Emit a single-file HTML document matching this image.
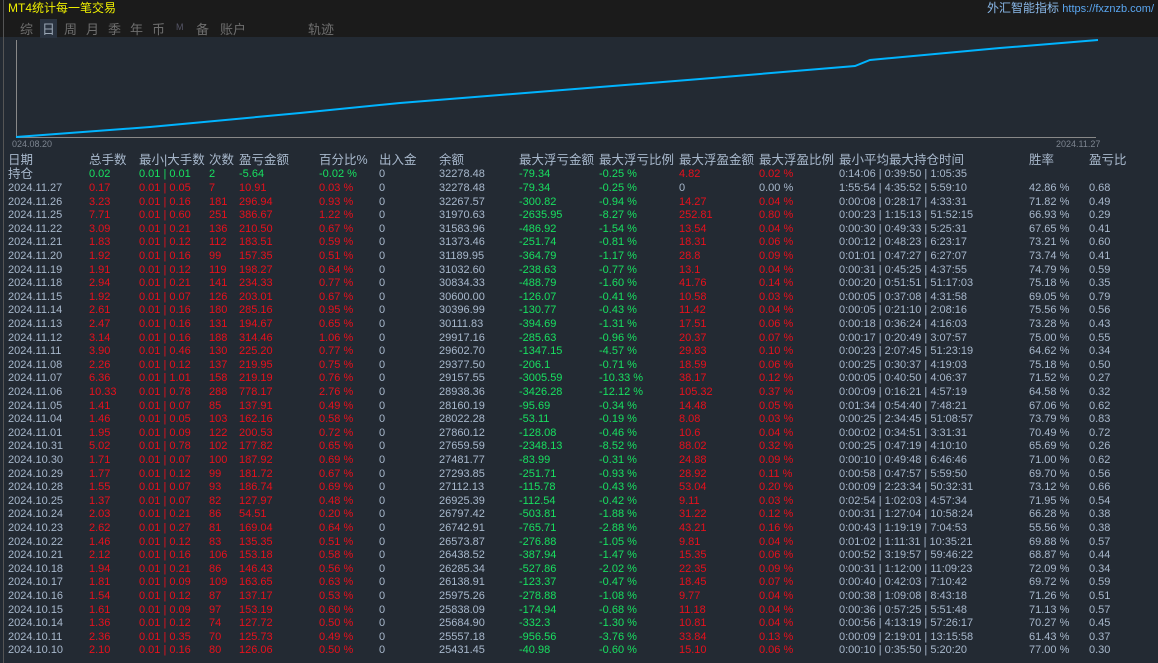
<!DOCTYPE html>
<html><head><meta charset="utf-8"><style>
body{margin:0;width:1158px;height:663px;overflow:hidden;background:#232a33;font-family:"Liberation Sans","Noto Sans CJK SC",sans-serif;position:relative}
.top{position:absolute;left:0;top:0;width:1158px;height:37px;background:#1b1b1b}
.title{position:absolute;left:8px;top:-1px;color:#f0f000;font-size:12px}
.tabs span{position:absolute;top:19px;color:#6e6e6e;font-size:13px;white-space:nowrap}
.sel{background:#2a3340;color:#9aa6b4 !important;padding:0 2px}
.rt{position:absolute;right:4px;top:-1px;font-size:12px;color:#8ab8e8}
.rt b{font-weight:normal;color:#5aa6f0;font-size:11px}
.lb{position:absolute;font-size:9px;color:#7d8590}
.r{position:absolute;left:0;height:13.6px;line-height:13.6px;font-size:11px;color:#a8b8cc;white-space:nowrap;width:1158px}
.r span{position:absolute;top:0}
.h{font-size:12.5px;color:#a8b8cc}
.g{color:#18e060}.d{color:#e8101c}
.a{left:8px}.b{left:89px}.c{left:139px}.e{left:209px}.f{left:239px}.p{left:319px}.i{left:379px}.j{left:439px}.k{left:519px}.l{left:599px}.m{left:679px}.n{left:759px}.o{left:839px}.q{left:1029px}.s{left:1089px}
</style></head><body>
<div class="top">
<div class="title">MT4统计每一笔交易</div>
<div class="tabs"><span style="left:20px">综</span><span class="sel" style="left:40px">日</span><span style="left:64px">周</span><span style="left:86px">月</span><span style="left:108px">季</span><span style="left:130px">年</span><span style="left:152px">币</span><span style="left:176px;font-size:9px;color:#556;top:22px">M</span><span style="left:196px">备</span><span style="left:220px">账户</span><span style="left:308px">轨迹</span></div>
<div class="rt">外汇智能指标 <b>https://fxznzb.com/</b></div>
</div>
<div style="position:absolute;left:3px;top:0;width:1px;height:663px;background:#555"></div>
<svg style="position:absolute;left:0;top:37px" width="1158" height="110">
<line x1="16.5" y1="3" x2="16.5" y2="100" stroke="#888" stroke-width="1"/>
<line x1="16" y1="100.5" x2="1096" y2="100.5" stroke="#888" stroke-width="1"/>
<polyline fill="none" stroke="#00b4ff" stroke-width="2" points="16,100 150,90 300,76 400,66 550,54 700,42 855,29 870,23 1000,11 1098,3"/>
</svg>
<div class="lb" style="left:12px;top:139px">024.08.20</div>
<div class="lb" style="left:1056px;top:139px">2024.11.27</div>
<div class="r h" style="top:154px"><span class="a">日期</span><span class="b">总手数</span><span class="c">最小|大手数</span><span class="e">次数</span><span class="f">盈亏金额</span><span class="p">百分比%</span><span class="i">出入金</span><span class="j">余额</span><span class="k">最大浮亏金额</span><span class="l">最大浮亏比例</span><span class="m">最大浮盈金额</span><span class="n">最大浮盈比例</span><span class="o">最小平均最大持仓时间</span><span class="q">胜率</span><span class="s">盈亏比</span></div>
<div class="r" style="top:168px"><span class="a h">持仓</span><span class="b g">0.02</span><span class="c g">0.01 | 0.01</span><span class="e g">2</span><span class="f g">-5.64</span><span class="p g">-0.02 %</span><span class="i">0</span><span class="j">32278.48</span><span class="k g">-79.34</span><span class="l g">-0.25 %</span><span class="m d">4.82</span><span class="n d">0.02 %</span><span class="o">0:14:06 | 0:39:50 | 1:05:35</span></div>
<div class="r" style="top:182px"><span class="a">2024.11.27</span><span class="b d">0.17</span><span class="c d">0.01 | 0.05</span><span class="e d">7</span><span class="f d">10.91</span><span class="p d">0.03 %</span><span class="i">0</span><span class="j">32278.48</span><span class="k g">-79.34</span><span class="l g">-0.25 %</span><span class="m">0</span><span class="n">0.00 %</span><span class="o">1:55:54 | 4:35:52 | 5:59:10</span><span class="q">42.86 %</span><span class="s">0.68</span></div>
<div class="r" style="top:195.6px"><span class="a">2024.11.26</span><span class="b d">3.23</span><span class="c d">0.01 | 0.16</span><span class="e d">181</span><span class="f d">296.94</span><span class="p d">0.93 %</span><span class="i">0</span><span class="j">32267.57</span><span class="k g">-300.82</span><span class="l g">-0.94 %</span><span class="m d">14.27</span><span class="n d">0.04 %</span><span class="o">0:00:08 | 0:28:17 | 4:33:31</span><span class="q">71.82 %</span><span class="s">0.49</span></div>
<div class="r" style="top:209.2px"><span class="a">2024.11.25</span><span class="b d">7.71</span><span class="c d">0.01 | 0.60</span><span class="e d">251</span><span class="f d">386.67</span><span class="p d">1.22 %</span><span class="i">0</span><span class="j">31970.63</span><span class="k g">-2635.95</span><span class="l g">-8.27 %</span><span class="m d">252.81</span><span class="n d">0.80 %</span><span class="o">0:00:23 | 1:15:13 | 51:52:15</span><span class="q">66.93 %</span><span class="s">0.29</span></div>
<div class="r" style="top:222.8px"><span class="a">2024.11.22</span><span class="b d">3.09</span><span class="c d">0.01 | 0.21</span><span class="e d">136</span><span class="f d">210.50</span><span class="p d">0.67 %</span><span class="i">0</span><span class="j">31583.96</span><span class="k g">-486.92</span><span class="l g">-1.54 %</span><span class="m d">13.54</span><span class="n d">0.04 %</span><span class="o">0:00:30 | 0:49:33 | 5:25:31</span><span class="q">67.65 %</span><span class="s">0.41</span></div>
<div class="r" style="top:236.4px"><span class="a">2024.11.21</span><span class="b d">1.83</span><span class="c d">0.01 | 0.12</span><span class="e d">112</span><span class="f d">183.51</span><span class="p d">0.59 %</span><span class="i">0</span><span class="j">31373.46</span><span class="k g">-251.74</span><span class="l g">-0.81 %</span><span class="m d">18.31</span><span class="n d">0.06 %</span><span class="o">0:00:12 | 0:48:23 | 6:23:17</span><span class="q">73.21 %</span><span class="s">0.60</span></div>
<div class="r" style="top:250px"><span class="a">2024.11.20</span><span class="b d">1.92</span><span class="c d">0.01 | 0.16</span><span class="e d">99</span><span class="f d">157.35</span><span class="p d">0.51 %</span><span class="i">0</span><span class="j">31189.95</span><span class="k g">-364.79</span><span class="l g">-1.17 %</span><span class="m d">28.8</span><span class="n d">0.09 %</span><span class="o">0:01:01 | 0:47:27 | 6:27:07</span><span class="q">73.74 %</span><span class="s">0.41</span></div>
<div class="r" style="top:263.6px"><span class="a">2024.11.19</span><span class="b d">1.91</span><span class="c d">0.01 | 0.12</span><span class="e d">119</span><span class="f d">198.27</span><span class="p d">0.64 %</span><span class="i">0</span><span class="j">31032.60</span><span class="k g">-238.63</span><span class="l g">-0.77 %</span><span class="m d">13.1</span><span class="n d">0.04 %</span><span class="o">0:00:31 | 0:45:25 | 4:37:55</span><span class="q">74.79 %</span><span class="s">0.59</span></div>
<div class="r" style="top:277.2px"><span class="a">2024.11.18</span><span class="b d">2.94</span><span class="c d">0.01 | 0.21</span><span class="e d">141</span><span class="f d">234.33</span><span class="p d">0.77 %</span><span class="i">0</span><span class="j">30834.33</span><span class="k g">-488.79</span><span class="l g">-1.60 %</span><span class="m d">41.76</span><span class="n d">0.14 %</span><span class="o">0:00:20 | 0:51:51 | 51:17:03</span><span class="q">75.18 %</span><span class="s">0.35</span></div>
<div class="r" style="top:290.8px"><span class="a">2024.11.15</span><span class="b d">1.92</span><span class="c d">0.01 | 0.07</span><span class="e d">126</span><span class="f d">203.01</span><span class="p d">0.67 %</span><span class="i">0</span><span class="j">30600.00</span><span class="k g">-126.07</span><span class="l g">-0.41 %</span><span class="m d">10.58</span><span class="n d">0.03 %</span><span class="o">0:00:05 | 0:37:08 | 4:31:58</span><span class="q">69.05 %</span><span class="s">0.79</span></div>
<div class="r" style="top:304.4px"><span class="a">2024.11.14</span><span class="b d">2.61</span><span class="c d">0.01 | 0.16</span><span class="e d">180</span><span class="f d">285.16</span><span class="p d">0.95 %</span><span class="i">0</span><span class="j">30396.99</span><span class="k g">-130.77</span><span class="l g">-0.43 %</span><span class="m d">11.42</span><span class="n d">0.04 %</span><span class="o">0:00:05 | 0:21:10 | 2:08:16</span><span class="q">75.56 %</span><span class="s">0.56</span></div>
<div class="r" style="top:318px"><span class="a">2024.11.13</span><span class="b d">2.47</span><span class="c d">0.01 | 0.16</span><span class="e d">131</span><span class="f d">194.67</span><span class="p d">0.65 %</span><span class="i">0</span><span class="j">30111.83</span><span class="k g">-394.69</span><span class="l g">-1.31 %</span><span class="m d">17.51</span><span class="n d">0.06 %</span><span class="o">0:00:18 | 0:36:24 | 4:16:03</span><span class="q">73.28 %</span><span class="s">0.43</span></div>
<div class="r" style="top:331.6px"><span class="a">2024.11.12</span><span class="b d">3.14</span><span class="c d">0.01 | 0.16</span><span class="e d">188</span><span class="f d">314.46</span><span class="p d">1.06 %</span><span class="i">0</span><span class="j">29917.16</span><span class="k g">-285.63</span><span class="l g">-0.96 %</span><span class="m d">20.37</span><span class="n d">0.07 %</span><span class="o">0:00:17 | 0:20:49 | 3:07:57</span><span class="q">75.00 %</span><span class="s">0.55</span></div>
<div class="r" style="top:345.2px"><span class="a">2024.11.11</span><span class="b d">3.90</span><span class="c d">0.01 | 0.46</span><span class="e d">130</span><span class="f d">225.20</span><span class="p d">0.77 %</span><span class="i">0</span><span class="j">29602.70</span><span class="k g">-1347.15</span><span class="l g">-4.57 %</span><span class="m d">29.83</span><span class="n d">0.10 %</span><span class="o">0:00:23 | 2:07:45 | 51:23:19</span><span class="q">64.62 %</span><span class="s">0.34</span></div>
<div class="r" style="top:358.8px"><span class="a">2024.11.08</span><span class="b d">2.26</span><span class="c d">0.01 | 0.12</span><span class="e d">137</span><span class="f d">219.95</span><span class="p d">0.75 %</span><span class="i">0</span><span class="j">29377.50</span><span class="k g">-206.1</span><span class="l g">-0.71 %</span><span class="m d">18.59</span><span class="n d">0.06 %</span><span class="o">0:00:25 | 0:30:37 | 4:19:03</span><span class="q">75.18 %</span><span class="s">0.50</span></div>
<div class="r" style="top:372.4px"><span class="a">2024.11.07</span><span class="b d">6.36</span><span class="c d">0.01 | 1.01</span><span class="e d">158</span><span class="f d">219.19</span><span class="p d">0.76 %</span><span class="i">0</span><span class="j">29157.55</span><span class="k g">-3005.59</span><span class="l g">-10.33 %</span><span class="m d">38.17</span><span class="n d">0.12 %</span><span class="o">0:00:05 | 0:40:50 | 4:06:37</span><span class="q">71.52 %</span><span class="s">0.27</span></div>
<div class="r" style="top:386px"><span class="a">2024.11.06</span><span class="b d">10.33</span><span class="c d">0.01 | 0.78</span><span class="e d">288</span><span class="f d">778.17</span><span class="p d">2.76 %</span><span class="i">0</span><span class="j">28938.36</span><span class="k g">-3426.28</span><span class="l g">-12.12 %</span><span class="m d">105.32</span><span class="n d">0.37 %</span><span class="o">0:00:09 | 0:16:21 | 4:57:19</span><span class="q">64.58 %</span><span class="s">0.32</span></div>
<div class="r" style="top:399.6px"><span class="a">2024.11.05</span><span class="b d">1.41</span><span class="c d">0.01 | 0.07</span><span class="e d">85</span><span class="f d">137.91</span><span class="p d">0.49 %</span><span class="i">0</span><span class="j">28160.19</span><span class="k g">-95.69</span><span class="l g">-0.34 %</span><span class="m d">14.48</span><span class="n d">0.05 %</span><span class="o">0:01:34 | 0:54:40 | 7:48:21</span><span class="q">67.06 %</span><span class="s">0.62</span></div>
<div class="r" style="top:413.2px"><span class="a">2024.11.04</span><span class="b d">1.46</span><span class="c d">0.01 | 0.05</span><span class="e d">103</span><span class="f d">162.16</span><span class="p d">0.58 %</span><span class="i">0</span><span class="j">28022.28</span><span class="k g">-53.11</span><span class="l g">-0.19 %</span><span class="m d">8.08</span><span class="n d">0.03 %</span><span class="o">0:00:25 | 2:34:45 | 51:08:57</span><span class="q">73.79 %</span><span class="s">0.83</span></div>
<div class="r" style="top:426.8px"><span class="a">2024.11.01</span><span class="b d">1.95</span><span class="c d">0.01 | 0.09</span><span class="e d">122</span><span class="f d">200.53</span><span class="p d">0.72 %</span><span class="i">0</span><span class="j">27860.12</span><span class="k g">-128.08</span><span class="l g">-0.46 %</span><span class="m d">10.6</span><span class="n d">0.04 %</span><span class="o">0:00:02 | 0:34:51 | 3:31:31</span><span class="q">70.49 %</span><span class="s">0.72</span></div>
<div class="r" style="top:440.4px"><span class="a">2024.10.31</span><span class="b d">5.02</span><span class="c d">0.01 | 0.78</span><span class="e d">102</span><span class="f d">177.82</span><span class="p d">0.65 %</span><span class="i">0</span><span class="j">27659.59</span><span class="k g">-2348.13</span><span class="l g">-8.52 %</span><span class="m d">88.02</span><span class="n d">0.32 %</span><span class="o">0:00:25 | 0:47:19 | 4:10:10</span><span class="q">65.69 %</span><span class="s">0.26</span></div>
<div class="r" style="top:454px"><span class="a">2024.10.30</span><span class="b d">1.71</span><span class="c d">0.01 | 0.07</span><span class="e d">100</span><span class="f d">187.92</span><span class="p d">0.69 %</span><span class="i">0</span><span class="j">27481.77</span><span class="k g">-83.99</span><span class="l g">-0.31 %</span><span class="m d">24.88</span><span class="n d">0.09 %</span><span class="o">0:00:10 | 0:49:48 | 6:46:46</span><span class="q">71.00 %</span><span class="s">0.62</span></div>
<div class="r" style="top:467.6px"><span class="a">2024.10.29</span><span class="b d">1.77</span><span class="c d">0.01 | 0.12</span><span class="e d">99</span><span class="f d">181.72</span><span class="p d">0.67 %</span><span class="i">0</span><span class="j">27293.85</span><span class="k g">-251.71</span><span class="l g">-0.93 %</span><span class="m d">28.92</span><span class="n d">0.11 %</span><span class="o">0:00:58 | 0:47:57 | 5:59:50</span><span class="q">69.70 %</span><span class="s">0.56</span></div>
<div class="r" style="top:481.2px"><span class="a">2024.10.28</span><span class="b d">1.55</span><span class="c d">0.01 | 0.07</span><span class="e d">93</span><span class="f d">186.74</span><span class="p d">0.69 %</span><span class="i">0</span><span class="j">27112.13</span><span class="k g">-115.78</span><span class="l g">-0.43 %</span><span class="m d">53.04</span><span class="n d">0.20 %</span><span class="o">0:00:09 | 2:23:34 | 50:32:31</span><span class="q">73.12 %</span><span class="s">0.66</span></div>
<div class="r" style="top:494.8px"><span class="a">2024.10.25</span><span class="b d">1.37</span><span class="c d">0.01 | 0.07</span><span class="e d">82</span><span class="f d">127.97</span><span class="p d">0.48 %</span><span class="i">0</span><span class="j">26925.39</span><span class="k g">-112.54</span><span class="l g">-0.42 %</span><span class="m d">9.11</span><span class="n d">0.03 %</span><span class="o">0:02:54 | 1:02:03 | 4:57:34</span><span class="q">71.95 %</span><span class="s">0.54</span></div>
<div class="r" style="top:508.4px"><span class="a">2024.10.24</span><span class="b d">2.03</span><span class="c d">0.01 | 0.21</span><span class="e d">86</span><span class="f d">54.51</span><span class="p d">0.20 %</span><span class="i">0</span><span class="j">26797.42</span><span class="k g">-503.81</span><span class="l g">-1.88 %</span><span class="m d">31.22</span><span class="n d">0.12 %</span><span class="o">0:00:31 | 1:27:04 | 10:58:24</span><span class="q">66.28 %</span><span class="s">0.38</span></div>
<div class="r" style="top:522px"><span class="a">2024.10.23</span><span class="b d">2.62</span><span class="c d">0.01 | 0.27</span><span class="e d">81</span><span class="f d">169.04</span><span class="p d">0.64 %</span><span class="i">0</span><span class="j">26742.91</span><span class="k g">-765.71</span><span class="l g">-2.88 %</span><span class="m d">43.21</span><span class="n d">0.16 %</span><span class="o">0:00:43 | 1:19:19 | 7:04:53</span><span class="q">55.56 %</span><span class="s">0.38</span></div>
<div class="r" style="top:535.6px"><span class="a">2024.10.22</span><span class="b d">1.46</span><span class="c d">0.01 | 0.12</span><span class="e d">83</span><span class="f d">135.35</span><span class="p d">0.51 %</span><span class="i">0</span><span class="j">26573.87</span><span class="k g">-276.88</span><span class="l g">-1.05 %</span><span class="m d">9.81</span><span class="n d">0.04 %</span><span class="o">0:01:02 | 1:11:31 | 10:35:21</span><span class="q">69.88 %</span><span class="s">0.57</span></div>
<div class="r" style="top:549.2px"><span class="a">2024.10.21</span><span class="b d">2.12</span><span class="c d">0.01 | 0.16</span><span class="e d">106</span><span class="f d">153.18</span><span class="p d">0.58 %</span><span class="i">0</span><span class="j">26438.52</span><span class="k g">-387.94</span><span class="l g">-1.47 %</span><span class="m d">15.35</span><span class="n d">0.06 %</span><span class="o">0:00:52 | 3:19:57 | 59:46:22</span><span class="q">68.87 %</span><span class="s">0.44</span></div>
<div class="r" style="top:562.8px"><span class="a">2024.10.18</span><span class="b d">1.94</span><span class="c d">0.01 | 0.21</span><span class="e d">86</span><span class="f d">146.43</span><span class="p d">0.56 %</span><span class="i">0</span><span class="j">26285.34</span><span class="k g">-527.86</span><span class="l g">-2.02 %</span><span class="m d">22.35</span><span class="n d">0.09 %</span><span class="o">0:00:31 | 1:12:00 | 11:09:23</span><span class="q">72.09 %</span><span class="s">0.34</span></div>
<div class="r" style="top:576.4px"><span class="a">2024.10.17</span><span class="b d">1.81</span><span class="c d">0.01 | 0.09</span><span class="e d">109</span><span class="f d">163.65</span><span class="p d">0.63 %</span><span class="i">0</span><span class="j">26138.91</span><span class="k g">-123.37</span><span class="l g">-0.47 %</span><span class="m d">18.45</span><span class="n d">0.07 %</span><span class="o">0:00:40 | 0:42:03 | 7:10:42</span><span class="q">69.72 %</span><span class="s">0.59</span></div>
<div class="r" style="top:590px"><span class="a">2024.10.16</span><span class="b d">1.54</span><span class="c d">0.01 | 0.12</span><span class="e d">87</span><span class="f d">137.17</span><span class="p d">0.53 %</span><span class="i">0</span><span class="j">25975.26</span><span class="k g">-278.88</span><span class="l g">-1.08 %</span><span class="m d">9.77</span><span class="n d">0.04 %</span><span class="o">0:00:38 | 1:09:08 | 8:43:18</span><span class="q">71.26 %</span><span class="s">0.51</span></div>
<div class="r" style="top:603.6px"><span class="a">2024.10.15</span><span class="b d">1.61</span><span class="c d">0.01 | 0.09</span><span class="e d">97</span><span class="f d">153.19</span><span class="p d">0.60 %</span><span class="i">0</span><span class="j">25838.09</span><span class="k g">-174.94</span><span class="l g">-0.68 %</span><span class="m d">11.18</span><span class="n d">0.04 %</span><span class="o">0:00:36 | 0:57:25 | 5:51:48</span><span class="q">71.13 %</span><span class="s">0.57</span></div>
<div class="r" style="top:617.2px"><span class="a">2024.10.14</span><span class="b d">1.36</span><span class="c d">0.01 | 0.12</span><span class="e d">74</span><span class="f d">127.72</span><span class="p d">0.50 %</span><span class="i">0</span><span class="j">25684.90</span><span class="k g">-332.3</span><span class="l g">-1.30 %</span><span class="m d">10.81</span><span class="n d">0.04 %</span><span class="o">0:00:56 | 4:13:19 | 57:26:17</span><span class="q">70.27 %</span><span class="s">0.45</span></div>
<div class="r" style="top:630.8px"><span class="a">2024.10.11</span><span class="b d">2.36</span><span class="c d">0.01 | 0.35</span><span class="e d">70</span><span class="f d">125.73</span><span class="p d">0.49 %</span><span class="i">0</span><span class="j">25557.18</span><span class="k g">-956.56</span><span class="l g">-3.76 %</span><span class="m d">33.84</span><span class="n d">0.13 %</span><span class="o">0:00:09 | 2:19:01 | 13:15:58</span><span class="q">61.43 %</span><span class="s">0.37</span></div>
<div class="r" style="top:644.4px"><span class="a">2024.10.10</span><span class="b d">2.10</span><span class="c d">0.01 | 0.16</span><span class="e d">80</span><span class="f d">126.06</span><span class="p d">0.50 %</span><span class="i">0</span><span class="j">25431.45</span><span class="k g">-40.98</span><span class="l g">-0.60 %</span><span class="m d">15.10</span><span class="n d">0.06 %</span><span class="o">0:00:10 | 0:35:50 | 5:20:20</span><span class="q">77.00 %</span><span class="s">0.30</span></div>
</body></html>
